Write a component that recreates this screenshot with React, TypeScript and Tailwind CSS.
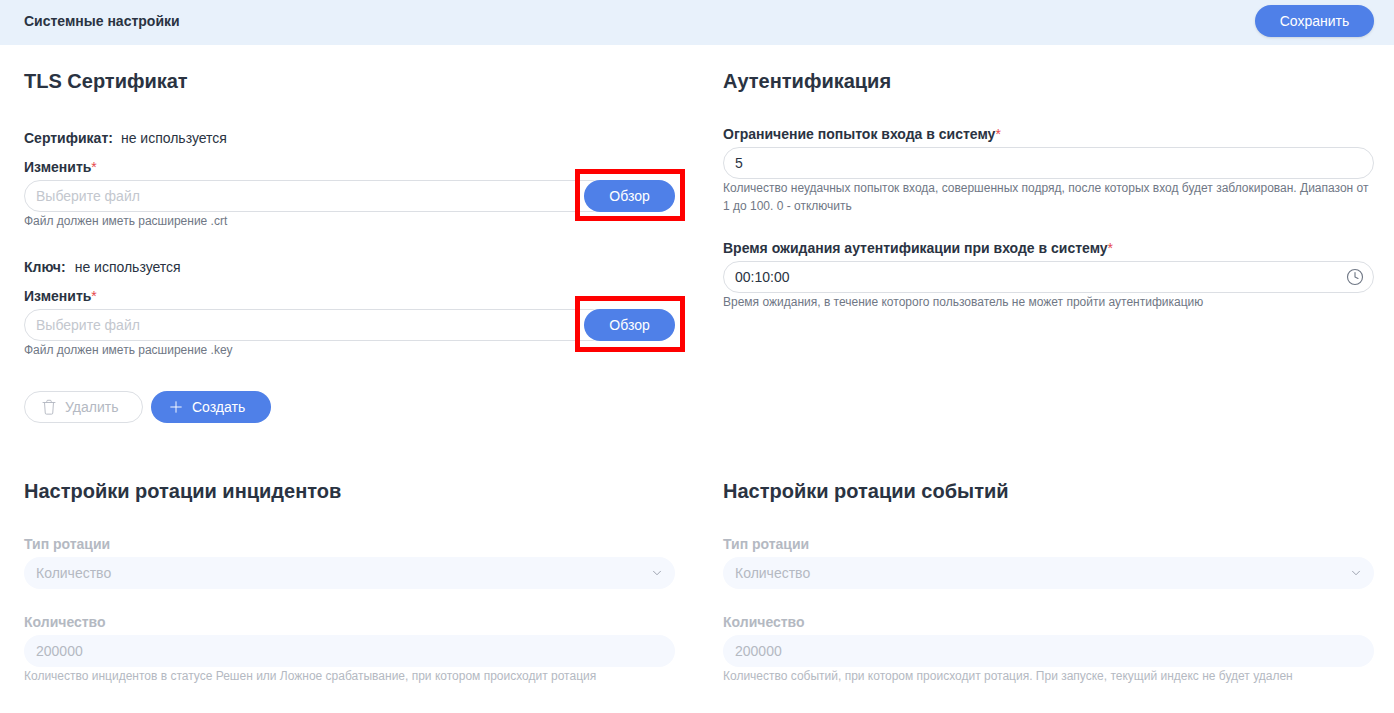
import { ChevronDown, Clock, Plus } from "lucide-react";
import { ReactNode } from "react";

function Label({ children, required, disabled }: { children: ReactNode; required?: boolean; disabled?: boolean }) {
  return (
    <div className={"text-[14px] leading-[20px] font-bold mb-[3px] " + (disabled ? "text-[#b4b9c2]" : "text-[#2a3342]")}>
      {children}
      {required && <span className="text-[#e5484d] font-normal">*</span>}
    </div>
  );
}

function Help({ children, disabled }: { children: ReactNode; disabled?: boolean }) {
  return (
    <div className={"text-[12px] leading-[18px] " + (disabled ? "text-[#b4b9c2]" : "text-[#6f7785]")}>{children}</div>
  );
}

function Input({ value, placeholder, icon }: { value?: string; placeholder?: string; icon?: ReactNode }) {
  return (
    <div className="h-8 flex-1 rounded-2xl border border-[#dcdfe4] bg-white px-[11px] flex items-center justify-between text-[14px]">
      <span className={value ? "text-[#2a3342]" : "text-[#c3c7ce]"}>{value ?? placeholder}</span>
      {icon}
    </div>
  );
}

function DisabledField({ value, icon }: { value: string; icon?: ReactNode }) {
  return (
    <div className="h-8 rounded-2xl bg-[#f5f8fe] px-3 flex items-center justify-between text-[14px] text-[#b4b9c2]">
      <span>{value}</span>
      {icon}
    </div>
  );
}

function FilePicker({ hint, tall }: { hint: string; tall?: boolean }) {
  return (
    <div>
      <Label required>Изменить</Label>
      <div className="flex relative">
        {/* the field runs on under the button, its round end stays hidden */}
        <div className="flex flex-1 -mr-6">
          <Input placeholder="Выберите файл" />
        </div>
        <button className="relative h-8 w-[91px] rounded-2xl bg-[#4f80e8] text-white text-[14px]">Обзор</button>
        <div
          className={
            "absolute right-[-10px] w-[110px] border-[5px] border-[#ff0000] pointer-events-none " +
            (tall ? "top-[-13px] h-[56px]" : "top-[-11px] h-[52px]")
          }
        />
      </div>
      <Help>{hint}</Help>
    </div>
  );
}

function RotationSection({ title, hint }: { title: string; hint: string }) {
  return (
    <section>
      <h2 className="text-[20px] leading-[28px] font-bold text-[#2a3342] mb-[29px]">{title}</h2>
      <Label disabled>Тип ротации</Label>
      <DisabledField
        value="Количество"
        icon={<ChevronDown size={14} className="text-[#7d8593] -mr-px" strokeWidth={1.25} />}
      />
      <div className="mt-[23px]">
        <Label disabled>Количество</Label>
        <DisabledField value="200000" />
        <Help disabled>{hint}</Help>
      </div>
    </section>
  );
}

export default function App() {
  return (
    <div className="min-h-screen bg-white font-['Liberation_Sans',sans-serif]">
      <header className="h-[45px] bg-[#e8f1fb] pl-6 pr-5 pb-[3px] flex items-center justify-between">
        <span className="text-[14px] font-bold text-[#2a3342]">Системные настройки</span>
        <button className="h-8 w-[119px] rounded-2xl bg-[#4f80e8] text-white text-[14px] shadow-sm">Сохранить</button>
      </header>
      <main className="pl-6 pr-5 pt-[22px] grid grid-cols-2 gap-x-12">
        <section className="h-[410px]">
          <h2 className="text-[20px] leading-[28px] font-bold text-[#2a3342] mb-[33px]">TLS Сертификат</h2>
          <div className="text-[14px] leading-[20px] text-[#2a3342] mb-[9px]">
            <span className="font-bold mr-2">Сертификат:</span>не используется
          </div>
          <FilePicker hint="Файл должен иметь расширение .crt" />
          <div className="text-[14px] leading-[20px] text-[#2a3342] mt-[27px] mb-[9px]">
            <span className="font-bold mr-[9px]">Ключ:</span>не используется
          </div>
          <FilePicker hint="Файл должен иметь расширение .key" tall />
          <div className="flex gap-2 mt-[32px]">
            <button className="h-8 w-[119px] rounded-2xl border border-[#dcdfe4] text-[#b4b9c2] text-[14px] flex items-center pl-[15px] gap-[7px]">
              <svg width="18" height="18" viewBox="0 0 24 24" fill="none" stroke="currentColor" strokeWidth="1.25" strokeLinecap="round">
                <path d="M4 6h16" />
                <path d="M9 6V4.5A1.5 1.5 0 0 1 10.5 3h3A1.5 1.5 0 0 1 15 4.5V6" />
                <path d="M6 6l1 14a1.5 1.5 0 0 0 1.5 1.5h7A1.5 1.5 0 0 0 17 20l1-14" />
              </svg>
              Удалить
            </button>
            <button className="h-8 w-[120px] rounded-2xl bg-[#4f80e8] text-white text-[14px] flex items-center pl-4 gap-[7px]">
              <Plus size={18} strokeWidth={1.25} />
              Создать
            </button>
          </div>
        </section>
        <section>
          <h2 className="text-[20px] leading-[28px] font-bold text-[#2a3342] mb-[29px]">Аутентификация</h2>
          <Label required>Ограничение попыток входа в систему</Label>
          <Input value="5" />
          <Help>
            Количество неудачных попыток входа, совершенных подряд, после которых вход будет заблокирован. Диапазон от 1
            до 100. 0 - отключить
          </Help>
          <div className="mt-[23px]">
            <Label required>Время ожидания аутентификации при входе в систему</Label>
            <Input value="00:10:00" icon={<Clock size={18} className="text-[#6f7785] -mr-[2px]" strokeWidth={1.5} />} />
            <Help>Время ожидания, в течение которого пользователь не может пройти аутентификацию</Help>
          </div>
        </section>
        <RotationSection
          title="Настройки ротации инцидентов"
          hint="Количество инцидентов в статусе Решен или Ложное срабатывание, при котором происходит ротация"
        />
        <RotationSection
          title="Настройки ротации событий"
          hint="Количество событий, при котором происходит ротация. При запуске, текущий индекс не будет удален"
        />
      </main>
    </div>
  );
}
